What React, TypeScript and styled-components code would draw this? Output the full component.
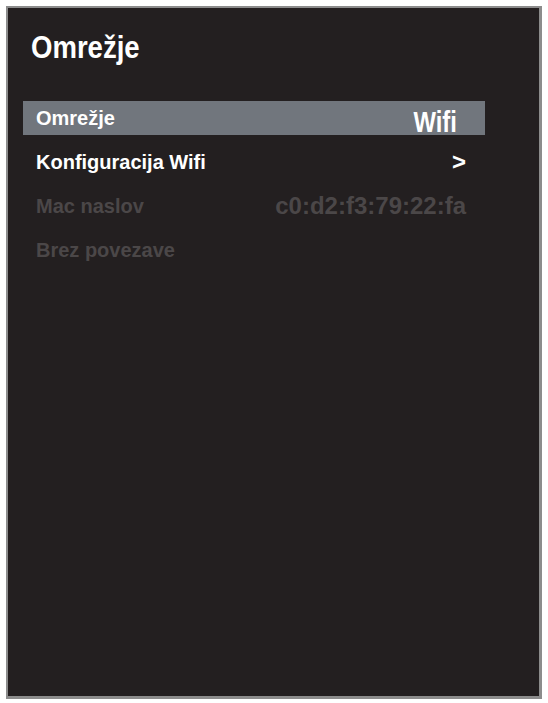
import React from 'react';
import styled, { createGlobalStyle } from 'styled-components';

const GlobalStyle = createGlobalStyle`
  html, body {
    margin: 0;
    padding: 0;
    background: #ffffff;
  }
  body {
    font-family: "Liberation Sans", Arial, sans-serif;
  }
`;

type Row = {
  label: string;
  value?: string;
  selected?: boolean;
  dim?: boolean;
};

const rows: Row[] = [
  { label: 'Omrežje', value: 'Wifi', selected: true },
  { label: 'Konfiguracija Wifi', value: '>' },
  { label: 'Mac naslov', value: 'c0:d2:f3:79:22:fa', dim: true },
  { label: 'Brez povezave', dim: true },
];

const App: React.FC = () => {
  return (
    <Page>
      <GlobalStyle />
      <Screen>
        <Title>
          <Narrow>Omrežje</Narrow>
        </Title>
        <Menu>
          {rows.map(row => (
            <Item key={row.label} selected={row.selected} dim={row.dim}>
              <Label>{row.label}</Label>
              {row.value && (
                <Value selected={row.selected}>{row.value}</Value>
              )}
            </Item>
          ))}
        </Menu>
      </Screen>
    </Page>
  );
};

const Page = styled.div`
  padding: 6px 6px 4px 6px;
  width: 548px;
  height: 703px;
  box-sizing: border-box;
`;

const Screen = styled.div`
  width: 536px;
  height: 693px;
  box-sizing: border-box;
  background: #231f20;
  border: 2px solid #8c8c8c;
  border-right-width: 3px;
  border-bottom-width: 3px;
  padding: 19px 54px 0 15px;
`;

const Title = styled.h1`
  margin: 0 0 0 8px;
  font-weight: bold;
  font-size: 32px;
  line-height: 40px;
  color: #ffffff;
`;

// the TV menu uses a condensed face; squeeze the regular one
const Narrow = styled.span`
  display: inline-block;
  transform: scaleX(0.86);
  transform-origin: left center;
`;

const Menu = styled.div`
  margin-top: 34px;
  display: flex;
  flex-direction: column;
  gap: 10px;
`;

const Item = styled.div<{ selected?: boolean; dim?: boolean }>`
  height: 34px;
  display: flex;
  align-items: center;
  justify-content: space-between;
  padding: 0 19px 0 13px;
  background: ${p => (p.selected ? '#71767d' : 'transparent')};
  color: ${p => (p.dim ? '#4b4748' : '#ffffff')};
  font-weight: bold;
  font-size: 20px;
  line-height: 34px;
`;

const Label = styled.span``;

const Value = styled.span<{ selected?: boolean }>`
  display: inline-block;
  ${p =>
    p.selected
      ? `
    font-size: 29px;
    padding: 8px 11px 0 0;
    transform: scaleX(0.82);
    transform-origin: right center;
  `
      : `
    font-size: 24px;
  `}
`;

export default App;
